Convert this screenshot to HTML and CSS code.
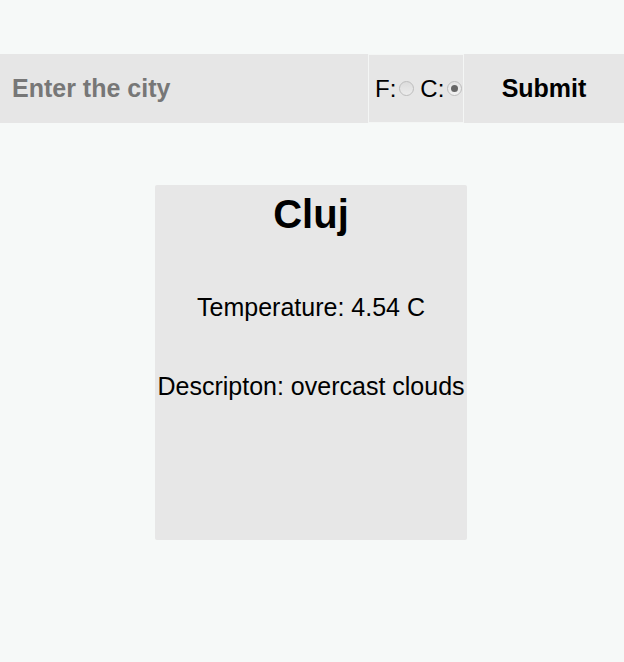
FILE: index.html
```html
<!DOCTYPE html>
<html>
<head>
<meta charset="utf-8">
<link rel="stylesheet" href="styles.css">
</head>
<body>
<form class="search">
  <input class="city" type="text" placeholder="Enter the city">
  <div class="units">
    <label class="unit">F:<input type="radio" name="u" class="radio"></label>
    <label class="unit">C:<input type="radio" name="u" class="radio" checked></label>
  </div>
  <button type="button" class="submit">Submit</button>
</form>
<div class="card">
  <h1 class="name">Cluj</h1>
  <p class="line temp">Temperature: 4.54 C</p>
  <p class="line desc">Descripton: overcast clouds</p>
</div>
</body>
</html>
```

FILE: styles.css
```css
html, body {
  margin: 0;
  padding: 0;
  background: #f6f9f8;
  font-family: "Liberation Sans", Arial, sans-serif;
  color: #000;
}
body {
  padding-top: 54px;
}
.search {
  display: flex;
  height: 69px;
  background: #e6e6e6;
}
.city {
  width: 368px;
  flex-shrink: 0;
  box-sizing: border-box;
  border: none;
  background: #e6e6e6;
  padding: 0 12px;
  font-family: "Liberation Sans", Arial, sans-serif;
  font-size: 25px;
  font-weight: bold;
  outline: none;
}
.city::placeholder {
  color: #777777;
}
.units {
  width: 96px;
  flex-shrink: 0;
  box-sizing: border-box;
  border: 1px solid #f4f6f5;
  display: flex;
  align-items: center;
  justify-content: flex-start;
  gap: 6px;
  font-size: 24px;
  padding-left: 6px;
}
.unit {
  display: flex;
  align-items: center;
  flex-shrink: 0;
}
.radio {
  appearance: none;
  -webkit-appearance: none;
  flex-shrink: 0;
  width: 15px;
  height: 15px;
  margin: 0 0 0 3px;
  border: 1px solid #bdbdbd;
  border-radius: 50%;
  background: linear-gradient(#dcdcdc, #ececec);
  box-sizing: border-box;
  position: relative;
}
.radio:checked {
  background: linear-gradient(#e4e4e4, #f2f2f2);
}
.radio:checked::after {
  content: "";
  position: absolute;
  left: 3px;
  top: 3px;
  width: 7px;
  height: 7px;
  border-radius: 50%;
  background: #666666;
}
.submit {
  flex: 1;
  border: none;
  background: #e6e6e6;
  font-family: "Liberation Sans", Arial, sans-serif;
  font-size: 25px;
  font-weight: bold;
  color: #000;
  padding: 0;
}
.card {
  width: 312px;
  height: 355px;
  margin: 62px 0 0 155px;
  background: #e7e7e7;
  border-radius: 2px;
  text-align: center;
  box-sizing: border-box;
}
.name {
  margin: 0;
  padding-top: 7px;
  font-size: 40px;
  font-weight: bold;
  line-height: 44px;
}
.line {
  margin: 0;
  font-size: 25px;
  line-height: 28px;
}
.temp {
  margin-top: 57px;
}
.desc {
  margin-top: 51px;
}
```
